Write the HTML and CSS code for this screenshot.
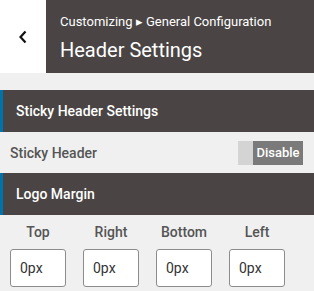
FILE: index.html
```html
<!DOCTYPE html>
<html>
<head>
<meta charset="utf-8">
<link rel="stylesheet" href="styles.css">
</head>
<body>
<div class="panel">
  <header class="top">
    <button class="back" aria-label="Back">
      <svg width="10" height="14" viewBox="0 0 10 14"><path d="M7.5 1.5 L2.5 7 L7.5 12.5" fill="none" stroke="#111" stroke-width="2.2"/></svg>
    </button>
    <div class="titles">
      <div class="crumb">Customizing ▸ General Configuration</div>
      <div class="title">Header Settings</div>
    </div>
  </header>
  <div class="spacer"></div>
  <div class="section-bar">Sticky Header Settings</div>
  <div class="row">
    <span class="row-label">Sticky Header</span>
    <span class="toggle"><span class="knob"></span><span class="state">Disable</span></span>
  </div>
  <div class="section-bar">Logo Margin</div>
  <div class="margins">
    <div class="field"><span class="f-label">Top</span><span class="input">0px</span></div>
    <div class="field"><span class="f-label">Right</span><span class="input">0px</span></div>
    <div class="field"><span class="f-label">Bottom</span><span class="input">0px</span></div>
    <div class="field"><span class="f-label">Left</span><span class="input">0px</span></div>
  </div>
</div>
</body>
</html>
```
FILE: styles.css
```css
* { box-sizing: border-box; }
html, body { margin: 0; padding: 0; }
body {
  width: 314px;
  height: 291px;
  overflow: hidden;
  background: #f0f0f0;
  font-family: Roboto, "Noto Sans", sans-serif;
}
.top {
  display: flex;
  height: 73px;
  background: #4a4544;
}
.back {
  width: 46px;
  height: 73px;
  border: 0;
  padding: 0;
  background: #fff;
  display: flex;
  align-items: center;
  justify-content: center;
}
.titles {
  padding: 14px 0 0 14px;
  color: #fff;
}
.crumb {
  font-size: 13px;
  line-height: 16px;
}
.title {
  font-size: 20px;
  line-height: 24px;
  margin-top: 8px;
}
.spacer { height: 17px; }
.section-bar {
  height: 42px;
  background: #4a4544;
  border-left: 3px solid #0073aa;
  color: #fff;
  font-size: 14px;
  font-weight: 500;
  display: flex;
  align-items: center;
  padding-left: 13px;
}
.row {
  height: 41px;
  display: flex;
  align-items: center;
  justify-content: space-between;
  padding: 0 11px 0 10px;
}
.row-label {
  font-size: 14px;
  font-weight: 500;
  color: #555;
}
.toggle {
  display: flex;
  height: 24px;
}
.knob {
  width: 15px;
  background: #d4d4d4;
}
.state {
  width: 50px;
  background: #7a7a7a;
  color: #fff;
  font-size: 13px;
  font-weight: 500;
  display: flex;
  align-items: center;
  justify-content: center;
}
.margins {
  display: flex;
  gap: 17px;
  padding: 9px 0 0 10px;
}
.field {
  width: 56px;
  display: flex;
  flex-direction: column;
  align-items: center;
  gap: 8px;
}
.f-label {
  font-size: 14px;
  font-weight: 500;
  color: #555;
  line-height: 17px;
}
.input {
  width: 56px;
  height: 38px;
  background: #fff;
  border: 1px solid #8c8c8c;
  border-radius: 3px;
  font-size: 14px;
  color: #333;
  display: flex;
  align-items: center;
  padding-left: 9px;
}
```
